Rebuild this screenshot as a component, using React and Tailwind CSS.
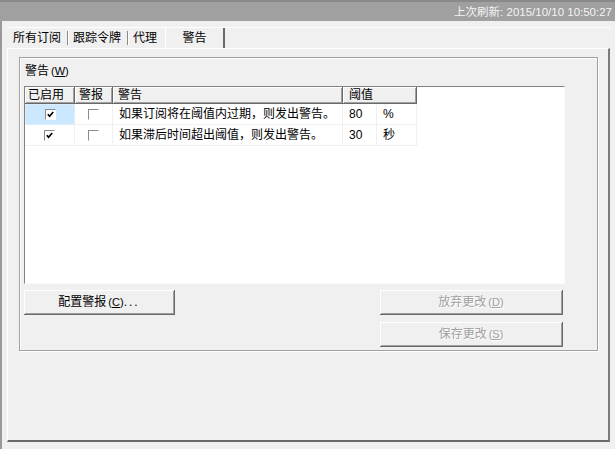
import React from 'react';

// ─── Классический чекбокс ─────────────────────────────────────────────
function Check({ checked }) {
  return (
    <span className="w-[11px] h-[11px] bg-white border border-t-[#8a8a8a] border-l-[#8a8a8a] border-r-white border-b-white flex items-center justify-center">
      {checked && (
        <svg width="7" height="7" viewBox="0 0 7 7">
          <path d="M0.8 3.2 L2.6 5.2 L6.2 1" fill="none" stroke="#000" strokeWidth="1.7" />
        </svg>
      )}
    </span>
  );
}

function Mn({ children }) {
  return <span className="ml-[2px] text-[11px]">(<u>{children}</u>)</span>;
}

function Btn({ children, disabled, className = '' }) {
  return (
    <div
      className={`h-[25px] bg-[#f0f0f0] border-r border-b border-[#696969] shadow-[inset_1px_1px_0_#fff,inset_-1px_-1px_0_#a0a0a0] flex items-center justify-center text-[12px] leading-[14px]
        ${disabled ? 'text-[#a0a0a0] [text-shadow:1px_1px_0_#fff]' : 'text-black'} ${className}`}
    >
      {children}
    </div>
  );
}

const headCls =
  'h-[17px] bg-[#f0f0f0] border-r border-b border-[#696969] shadow-[inset_1px_1px_0_#fff,inset_-1px_-1px_0_#a0a0a0] flex items-center text-[12px] leading-[14px]';
const cellCls = 'h-[21px] border-r border-b border-[#f0f0f0] flex items-center text-[12px] leading-[14px]';

const ROWS = [
  { text: '如果订阅将在阈值内过期，则发出警告。', value: '80', unit: '%', selected: true },
  { text: '如果滞后时间超出阈值，则发出警告。', value: '30', unit: '秒', selected: false },
];

export default function App() {
  return (
    <div className="w-[615px] h-[449px] bg-[#f0f0f0] flex flex-col overflow-hidden font-['Liberation_Sans','Noto_Sans_CJK_SC',sans-serif] text-black">
      {/* Верхняя полоса */}
      <div className="h-[21px] shrink-0 bg-[#a0a0a0] border-t-2 border-[#8a8a8a] flex items-center justify-end pr-[3px] text-[#f4f4f4] text-[11.5px] leading-[14px]">
        上次刷新: 2015/10/10 10:50:27
      </div>

      <div className="flex-1 border-l-2 border-[#9a9a9a] pl-[5px] pr-[5px] pt-[6px] pb-[7px] flex flex-col">
        {/* Вкладки */}
        <div className="h-[21px] shrink-0 flex items-stretch text-[12px] leading-[14px] border-t border-white">
          <div className="pl-[6px] pr-[6px] flex items-center">所有订阅</div>
          <div className="w-[2px] my-[3px] border-l border-[#8a8a8a] border-r border-r-white" />
          <div className="pl-[4px] pr-[6px] flex items-center">跟踪令牌</div>
          <div className="w-[2px] my-[3px] border-l border-[#8a8a8a] border-r border-r-white" />
          <div className="pl-[4px] pr-[8px] flex items-center">代理</div>
          <div className="w-[60px] border-l border-white border-r-2 border-r-[#696969] flex items-center justify-center">警告</div>
        </div>

        {/* Страница вкладки */}
        <div className="flex-1 border-t border-l border-white border-r-2 border-b-2 border-r-[#7a7a7a] border-b-[#6a6a6a] pl-[11px] pt-[8px]">
          {/* Группа */}
          <div className="w-[579px] h-[294px] border border-[#a0a0a0] shadow-[1px_1px_0_#fff,inset_1px_1px_0_#fff] pl-[4px] flex flex-col">
            <div className="h-[28px] shrink-0 pt-[5px] pl-[1px] text-[12px] leading-[16px]">
              警告<Mn>W</Mn>
            </div>

            {/* Список */}
            <div className="w-[541px] h-[198px] shrink-0 bg-white border border-t-[#828282] border-l-[#828282] border-r-[#fafafa] border-b-[#fafafa] flex flex-col">
              <div className="flex">
                <div className={`${headCls} w-[50px] pl-[3px]`}>已启用</div>
                <div className={`${headCls} w-[38px] pl-[4px]`}>警报</div>
                <div className={`${headCls} w-[230px] pl-[5px]`}>警告</div>
                <div className={`${headCls} w-[74px] pl-[6px]`}>阈值</div>
              </div>
              {ROWS.map((r, i) => (
                <div key={i} className="flex">
                  <div className={`${cellCls} w-[50px] justify-center ${r.selected ? 'bg-[#cce8ff] border border-dotted border-[#333]' : ''}`}>
                    <Check checked />
                  </div>
                  <div className={`${cellCls} w-[38px] justify-center`}>
                    <Check checked={false} />
                  </div>
                  <div className={`${cellCls} w-[230px] pl-[6px]`}>{r.text}</div>
                  <div className={`${cellCls} w-[34px] pl-[6px] text-[11px]`}>{r.value}</div>
                  <div className={`${cellCls} w-[40px] pl-[6px] text-[11px]`}>{r.unit}</div>
                </div>
              ))}
            </div>

            {/* Кнопки */}
            <div className="w-[541px] mt-[6px] flex justify-between pr-[2px]">
              <Btn className="w-[151px]">
                配置警报<Mn>C</Mn><span className="tracking-[2px]">...</span>
              </Btn>
              <div className="flex flex-col gap-[7px]">
                <Btn disabled className="w-[183px]">
                  放弃更改<Mn>D</Mn>
                </Btn>
                <Btn disabled className="w-[183px]">
                  保存更改<Mn>S</Mn>
                </Btn>
              </div>
            </div>
          </div>
        </div>
      </div>
    </div>
  );
}
